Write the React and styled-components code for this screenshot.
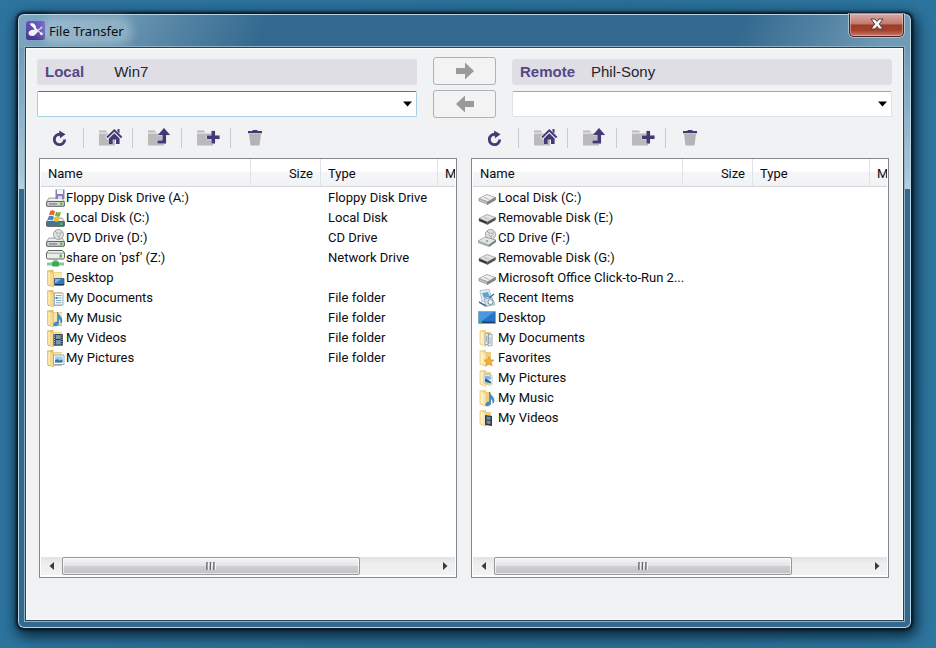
import React from "react";
import styled, { createGlobalStyle } from "styled-components";

const GlobalStyle = createGlobalStyle`
  *, *::before, *::after { box-sizing: border-box; }
  body { margin: 0; background: #2d76a0; }
  button, select { font: inherit; margin: 0; }
`;

const Desktop = styled.div`
  display: flex;
  min-height: 100vh;
  padding: 13px 24px 19px 17px;
  background: linear-gradient(100deg, #2d75a0, #2a7099 60%, #2d76a0);
  font-family: Roboto, "Liberation Sans", sans-serif;
  font-size: 13px;
  color: #0c0c10;
`;

const Window = styled.main`
  flex: 1;
  min-width: 0;
  display: flex;
  flex-direction: column;
  padding: 0 7px 7px;
  border: 1px solid #0b1a26;
  border-radius: 7px;
  background:
    linear-gradient(115deg, rgba(150, 187, 208, 0.75) 0, rgba(134, 172, 194, 0.7) 90px, rgba(51, 105, 143, 0) 230px, rgba(51, 105, 143, 0) 660px, rgba(134, 172, 194, 0.75) 800px) 0 0 / 100% 34px no-repeat,
    linear-gradient(#6f9cb8, #a9c6da 90%, #b6d0e0) 0 34px / 100% 141px no-repeat,
    #33698f;
  box-shadow:
    inset 0 0 0 1px #bcd5e4,
    0 0 3px 1px rgba(0, 10, 20, 0.85),
    2px 5px 14px 3px rgba(0, 15, 28, 0.75);
`;

const TitleBar = styled.header`
  display: flex;
  align-items: center;
  height: 33px;
  padding-left: 1px;
`;

const Title = styled.h1`
  margin: 0 auto 0 0;
  padding: 0 4px;
  font: 400 13px/20px "Noto Sans", "Open Sans", sans-serif;
  color: #0b0f14;
  border-radius: 10px;
  background: rgba(205, 224, 234, 0.35);
  box-shadow: 0 0 9px 5px rgba(205, 224, 234, 0.35);
`;

const CloseButton = styled.button`
  align-self: flex-start;
  display: grid;
  place-items: center;
  width: 55px;
  height: 23px;
  padding: 0 0 2px;
  border: 1px solid #4b2226;
  border-top: 0;
  border-radius: 0 0 5px 5px;
  background: linear-gradient(#d9a9a3, #c07a70 45%, #a03c26 50%, #a3432e 75%, #c87b69);
  box-shadow: inset 0 0 0 1px rgba(255, 220, 212, 0.45), 0 0 0 1px rgba(200, 220, 232, 0.65);
`;

const Client = styled.div`
  flex: 1;
  display: flex;
  flex-direction: column;
  padding: 9px 11px 42px 11px;
  border: 1px solid #2b4150;
  outline: 1px solid #8fb2c6;
  background: #f1f2f4;
  box-shadow: inset 0 0 0 1px #fbfcfc;
`;

const Connections = styled.section`
  display: grid;
  grid-template-columns: minmax(0, 1fr) 63px minmax(0, 1fr);
  grid-template-rows: 28px 28px;
  gap: 5px 16px;
`;

const MachineBar = styled.div`
  display: flex;
  align-items: center;
  align-self: end;
  gap: ${(p) => p.$gap}px;
  height: 26px;
  padding: 0 8px;
  border-radius: 3px;
  background: #dfdee5;
  font: 15px/20px "Liberation Sans", Arial, sans-serif;
  color: #26242e;
`;

const Side = styled.strong`
  color: #554886;
`;

const Combo = styled.div`
  display: grid;
  align-items: center;
  align-self: center;
  height: 26px;

  > * { grid-area: 1 / 1; }
  > svg { justify-self: end; margin-right: 4px; pointer-events: none; }
`;

const PathSelect = styled.select`
  appearance: none;
  width: 100%;
  height: 100%;
  padding: 0 20px 0 6px;
  border: 1px solid ${(p) => (p.$active ? "#a9cfe5" : "#dfe1e5")};
  border-top-color: ${(p) => (p.$active ? "#3c7fb1" : "#a5a7ae")};
  border-radius: 2px;
  background: #fff;
`;

const SendButton = styled.button`
  display: grid;
  place-items: center;
  padding: 0;
  border: 1px solid #adb2b5;
  border-radius: 3px;
  background: #f3f3f4;
  color: #999a9c;
`;

const Browsers = styled.section`
  flex: 1;
  display: grid;
  grid-template-columns: repeat(2, minmax(0, 1fr));
  gap: 14px;
  padding: 0 3px 0 2px;
`;

const Browser = styled.div`
  display: flex;
  flex-direction: column;
`;

const Toolbar = styled.div`
  display: flex;
  align-items: center;
  height: 40px;
  padding-left: ${(p) => p.$inset}px;
`;

const ToolButton = styled.button`
  display: flex;
  align-items: center;
  width: 49px;
  height: 20px;
  padding: 0 0 0 15px;
  border: 0;
  border-left: 1px solid #c9cbd0;
  background: none;

  &:first-child { width: 44px; padding-left: 12px; border-left-color: transparent; }
`;

const ListBox = styled.div`
  flex: 1;
  display: flex;
  flex-direction: column;
  min-width: 0;
  padding: 0 1px 2px;
  border: 1px solid #828790;
  background: #fff;
`;

const TableView = styled.div`
  flex: 1;
  overflow: hidden;
`;

const FileTable = styled.table`
  width: 500px;
  table-layout: fixed;
  border-collapse: separate;
  border-spacing: 0;
  white-space: nowrap;
`;

const HeadCell = styled.th`
  width: ${(p) => p.$width}px;
  height: 28px;
  padding: 1px 7px 0;
  text-align: ${(p) => p.$align || "left"};
  font-weight: 400;
  border-right: 1px solid #e0e2e6;
  border-bottom: 1px solid #d5d5d8;
  background: linear-gradient(#fff 45%, #f5f6f8 50%, #f1f2f4);
`;

const Cell = styled.td`
  height: 20px;
  padding: 2px 7px 0;
  line-height: 18px;
`;

const NameCell = styled(Cell)`
  padding: 2px 0 0 5px;
`;

const FileName = styled.span`
  display: flex;
  align-items: center;
  gap: 1px;
  height: 18px;

  > svg { flex: none; }
`;

const ScrollBar = styled.div`
  display: flex;
  height: 18px;
  background: linear-gradient(#e3e3e3, #eee 40%, #f2f2f2);
`;

const ScrollArrow = styled.button`
  flex: none;
  display: grid;
  place-items: center;
  width: 21px;
  padding: 0;
  border: 0;
  background: none;
`;

const ScrollTrack = styled.div`
  flex: 1;
  display: flex;
`;

const ScrollThumb = styled.div`
  display: grid;
  place-items: center;
  width: 80%;
  border: 1px solid #96979a;
  border-radius: 2px;
  background: linear-gradient(#f4f4f4, #e4e4e5 48%, #cfd0d2 52%, #bfc0c3);
  box-shadow: inset 0 0 0 1px rgba(255, 255, 255, 0.65);
`;

/* ---------- window and toolbar drawings ---------- */

const AppLogo = () => (
  <svg width="19" height="19" viewBox="0 0 19 19" aria-hidden="true">
    <defs>
      <linearGradient id="logo" x2="0" y2="1">
        <stop offset="0" stopColor="#6a55c8" />
        <stop offset="1" stopColor="#4a3496" />
      </linearGradient>
    </defs>
    <rect width="19" height="19" rx="2.5" fill="url(#logo)" />
    <path d="M4.500 2.500C7 1.500 9.500 3 9.800 5.500c.1 1.800 1 2.800 2.200 3.200L10.500 10C8.500 9.500 8 7.500 7 6.300 6 5.200 3.500 4 4.500 2.500z" fill="#fff" />
    <path d="M2.500 12c0-2.200 2.500-3.500 5-3.300 1.800.1 3 .8 4.800.5.5 1.600-.8 2.300-1.900 3.300-1 .9-1.700 2.300-3.700 2.500-2.400.2-4.200-1-4.200-3z" fill="#f2f0fb" />
    <path d="M12 9.200l3.500-2.400M12 9.600l3.500 3.200" stroke="#e6e1fa" strokeWidth="1.200" strokeLinecap="round" />
    <circle cx="15.500" cy="6.600" r="1.100" fill="#cfc6f2" />
    <circle cx="15.400" cy="12.800" r="1.400" fill="#fff" />
  </svg>
);

const CloseMark = () => (
  <svg width="14" height="12" viewBox="0 0 14 12" aria-hidden="true">
    <path d="M1 1h4l2 2.500L9 1h4L9.300 6l3.700 5H9L7 8.500 5 11H1l3.700-5z" fill="#f5f4f6" stroke="#57383d" strokeWidth="1" />
  </svg>
);

const DownMark = () => (
  <svg width="11" height="6" viewBox="0 0 11 6" aria-hidden="true">
    <path d="M1 0.500h9L5.500 5.500z" fill="#000" />
  </svg>
);

const BigArrow = ({ left }) => (
  <svg width="20" height="18" viewBox="0 0 20 18" aria-hidden="true">
    {left ? (
      <path d="M1 9L10 .5V6h9v6h-9v5.500z" fill="currentColor" />
    ) : (
      <path d="M19 9L10 .5V6H1v6h9v5.500z" fill="currentColor" />
    )}
  </svg>
);

const RefreshIcon = () => (
  <svg width="15" height="17" viewBox="0 0 15 17" aria-hidden="true">
    <path d="M12.700 9.500A5.200 5.200 0 1 1 8 4.300" fill="none" stroke="#453876" strokeWidth="2.800" />
    <path d="M7 0.500l6.500 3.700L8 8.300z" fill="#453876" />
  </svg>
);

const FolderShape = () => (
  <path d="M0 4.500V2.500h7l1 2zM0 5.500h16v12H0z" fill="#bab9bb" />
);

const HomeIcon = () => (
  <svg width="24" height="20" viewBox="0 0 24 20" aria-hidden="true">
    <FolderShape />
    <path d="M7.500 10.300L15.300 2.500l7.500 7.800" fill="none" stroke="#f1f2f4" strokeWidth="4" />
    <path d="M8 9.500L15.300 2.300 22.600 9.500" fill="none" stroke="#453876" strokeWidth="2" />
    <path d="M18.500 1h2v4.500l-2-2zM10 10.500l5.300-5.200 5.300 5.200V16h-3.600V11.500h-3.400V16H10z" fill="#453876" />
  </svg>
);

const UpIcon = () => (
  <svg width="24" height="20" viewBox="0 0 24 20" aria-hidden="true">
    <FolderShape />
    <path d="M16 0l6 7h-4v8.500H9.500V12.500h5V7H10z" fill="#453876" stroke="#dddde1" strokeWidth="1" paintOrder="stroke" />
  </svg>
);

const AddIcon = () => (
  <svg width="24" height="20" viewBox="0 0 24 20" aria-hidden="true">
    <FolderShape />
    <path d="M14.500 3h3.500v4.500h4.500v3.500H18v4.500h-3.500V11H10V7.500h4.500z" fill="#453876" stroke="#dddde1" strokeWidth="1" paintOrder="stroke" />
  </svg>
);

const TrashIcon = () => (
  <svg width="18" height="20" viewBox="0 0 18 20" aria-hidden="true">
    <path d="M3 6h12l-1.500 11.500h-9z" fill="#b4b4b7" />
    <path d="M2 3h4.500V2h5v1H16v2.300H2z" fill="#453876" />
  </svg>
);

const ScrollMark = ({ right }) => (
  <svg width="6" height="8" viewBox="0 0 6 8" aria-hidden="true">
    <path d={right ? "M1 0v8l4.500-4z" : "M5 0v8L.5 4z"} fill="#3a3a3e" />
  </svg>
);

const Grip = () => (
  <svg width="10" height="8" viewBox="0 0 10 8" aria-hidden="true">
    <path d="M1 0v8M4.500 0v8M8 0v8" stroke="#66676c" strokeWidth="1.500" />
    <path d="M2.300 1v7M5.800 1v7M9.300 1v7" stroke="#fafafa" strokeWidth="1" />
  </svg>
);

/* ---------- file list drawings ---------- */

const DriveBase = ({ fill = "#d3d4d5" }) => (
  <>
    <path d="M3 9h13l2.500 3.500v4.500H.5v-4.500z" fill="#eceded" stroke="#85878a" strokeWidth=".8" />
    <rect x=".7" y="12.500" width="17.600" height="4.800" rx="1" fill={fill} stroke="#54575b" strokeWidth=".9" />
    <path d="M3 15h8" stroke="#686a6e" strokeWidth="1" />
    <rect x="14.200" y="13.500" width="2.200" height="2.600" fill="#4dc12f" />
  </>
);

const SlimDrive = ({ dark }) => (
  <>
    <path d="M1 9.500L9 5.500l8.500 3-8 4.500z" fill={dark ? "#e3e3e3" : "#eeeeef"} stroke="#909193" strokeWidth=".7" />
    <path d="M1 9.500l8.500 3.500v2.500L1 12z" fill={dark ? "#303133" : "#c1c2c4"} stroke="#77797b" strokeWidth=".5" />
    <path d="M9.500 13l8-4.500V11l-8 4.500z" fill={dark ? "#4b4c4e" : "#88898c"} stroke="#66686a" strokeWidth=".5" />
    <path d="M6 8.500l5 2" stroke="#b5b6b8" strokeWidth="1" />
  </>
);

const Folder = () => (
  <>
    <path d="M2 1.500L7.500.8V3H16v14H2z" fill="#e3bd63" />
    <path d="M5 3.500h11v12H5z" fill="#f7e6ae" />
    <path d="M1.500 1.500L7.500 4v14l-6-2.200z" fill="#f4d98e" stroke="#dcb765" strokeWidth=".7" />
    <path d="M3.200 3v12.500" stroke="#fff2c5" strokeWidth="1.200" />
  </>
);

const SlimFolder = () => (
  <>
    <path d="M3 1.500L8 1v2h5v13H3z" fill="#ecd082" />
    <path d="M2 1.500L8 4v13.500L2 15z" fill="#fbe8ae" stroke="#e6c87c" strokeWidth=".7" />
    <path d="M3.800 3.500v11" stroke="#fff8dc" strokeWidth="1.200" />
  </>
);

const Disc = () => (
  <>
    <circle cx="12.500" cy="5.500" r="5" fill="#dedfe2" stroke="#8c9092" strokeWidth=".8" />
    <path d="M12.500 5.500L9 2M12.500 5.500l4-2.500M12.500 5.500l1 4.500" stroke="#9bb09d" strokeWidth="1" />
    <circle cx="12.500" cy="5.500" r="1.500" fill="#fff" stroke="#777" strokeWidth=".6" />
  </>
);

const Note = () => (
  <path d="M11.500 3c0 3 5 4.500 4.500 9 0 1-.5 1.800-1.200 2.300.7-2.500-1-4.300-2.200-4.800V14c0 1.800-1.600 3-3.300 3s-2.300-1.800-1-3 2.200-1 3.200-.9V3z" fill="#3c91d2" stroke="#2b6ba6" strokeWidth=".5" />
);

const drawings = {
  floppy: (
    <>
      <DriveBase />
      <path d="M9.500.5h9v9.500h-9z" fill="#8480b5" />
      <path d="M11 .5h6V5h-6z" fill="#f4f4fb" />
      <path d="M12 7h4v3h-4z" fill="#d6d6e8" />
    </>
  ),
  system: (
    <>
      <DriveBase fill="#42799b" />
      <path d="M4 2c2-1 3.500-.8 5 .2L8 6.500c-1.500-1-3-1-5-.2z" fill="#e5692d" />
      <path d="M10 2.700c1.500 1 3.200 1 5 .3l-1.200 4.200c-1.700.8-3.300.7-4.800-.3z" fill="#75b43c" />
      <path d="M2.700 7.200c2-.9 3.500-.7 5 .3l-1.100 4c-1.600-.9-3.200-1-5-.2z" fill="#3e87cc" />
      <path d="M8.700 7.900c1.500 1 3.100 1 4.900.3l-1.100 4c-1.800.8-3.400.7-4.900-.3z" fill="#f2bd2e" />
    </>
  ),
  dvd: (
    <>
      <DriveBase />
      <Disc />
    </>
  ),
  network: (
    <>
      <path d="M2.500 1.500h14L18.500 4v4.500a1.500 1.500 0 0 1-1.500 1.500H2A1.500 1.500 0 0 1 .5 8.500V4z" fill="#eceded" stroke="#616467" strokeWidth="1" />
      <path d="M1 4.200h17" stroke="#8b8e91" strokeWidth=".8" />
      <rect x="13.500" y="5.500" width="2.500" height="3" fill="#4dc12f" />
      <path d="M7.500 10.500h4v3h6.500v3H1v-3h6.500z" fill="#86c893" />
      <rect x="6" y="12.500" width="7" height="5" rx="1" fill="#3da957" />
    </>
  ),
  disk: <SlimDrive />,
  removable: <SlimDrive dark />,
  cd: (
    <>
      <Disc />
      <path d="M0 12l7-4 11 3-7 5z" fill="#e2e3e4" stroke="#8b8d90" strokeWidth=".7" />
      <path d="M0 12l11 4v2L0 14z" fill="#a9abad" />
      <path d="M11 16l7-5v2l-7 5z" fill="#707275" />
      <circle cx="9" cy="12" r="1" fill="#5dbb41" />
    </>
  ),
  recent: (
    <>
      <path d="M2 1.500L11 .5l3 10-10 2z" fill="#e9f1f5" stroke="#9aa8b2" strokeWidth=".7" />
      <path d="M4 4l6-1 2 5-6 1z" fill="#58a5cf" />
      <path d="M6 10l8-1.500 3 7-9 2z" fill="#d5dde2" stroke="#8995a0" strokeWidth=".7" />
      <path d="M1 13l7 4M11 9l5-4" stroke="#3d719a" strokeWidth="1.500" />
      <circle cx="12.500" cy="13" r="2.500" fill="#f7fafb" stroke="#4c819f" strokeWidth=".8" />
    </>
  ),
  screen: (
    <>
      <path d="M.5 2.500h17v12H.5z" fill="#2675c3" stroke="#78a8ca" strokeWidth=".8" />
      <path d="M1 3h15L4 12H1z" fill="#4899df" />
      <path d="M1 13.300h16" stroke="#163e69" strokeWidth="1.300" />
      <circle cx="2.500" cy="13.500" r="1.500" fill="#55ba61" />
    </>
  ),
  desktop: (
    <>
      <Folder />
      <path d="M8.500 9.500h9.500v6.500H8.500z" fill="#3079bf" stroke="#375a76" strokeWidth=".8" />
      <path d="M9 10h6l-5 4H9z" fill="#77b8e6" />
      <path d="M9 15.600h9" stroke="#173b5e" strokeWidth="1.200" />
    </>
  ),
  documents: (
    <>
      <Folder />
      <path d="M8.500 4H17v12H8.500z" fill="#f5fafc" stroke="#8ba0ac" strokeWidth=".8" />
      <path d="M10 6.500h5.500M12 9h3.500M10 11.500h5.500M10 13.700h5.500" stroke="#88a9c1" strokeWidth="1" />
      <path d="M9.500 8h2v2h-2z" fill="#3d83b8" />
    </>
  ),
  papers: (
    <>
      <SlimFolder />
      <path d="M7 5l3.500-1v11L7 16zM10 6l4-1v11.500L10 17z" fill="#eef3f6" stroke="#8497a4" strokeWidth=".8" />
      <path d="M8.500 7v6M12 8v7" stroke="#91a1ad" strokeWidth=".8" />
    </>
  ),
  favorites: (
    <>
      <SlimFolder />
      <path d="M11 7.500l1.300 3.300 3.700.2-2.800 2.400 1 3.600-3.200-2-3.200 2 1-3.600L6 11l3.700-.2z" fill="#f4ae37" stroke="#d99538" strokeWidth=".7" />
    </>
  ),
  photos: (
    <>
      <SlimFolder />
      <path d="M6 5l8 1.500v9L6 14z" fill="#f4f9fc" stroke="#9db0bc" strokeWidth=".7" />
      <path d="M7 6.500l6 1v3l-6-.5z" fill="#7cb9e3" />
      <path d="M7 9.500l3 1 3 2.500v1.500L7 13z" fill="#38617e" />
      <path d="M10 16l5-2v2l-3 1.500z" fill="#dce5ea" />
    </>
  ),
  songs: (
    <>
      <SlimFolder />
      <Note />
    </>
  ),
  films: (
    <>
      <SlimFolder />
      <path d="M7 6l7 1v10l-7-1z" fill="#343a44" />
      <path d="M8.500 7.500l4 .5v3l-4-.5zM8.500 11.500l4 .5v3l-4-.5z" fill="#5b8fbd" />
      <path d="M9 14l2.500-2v2.500z" fill="#c18a5a" />
    </>
  ),
  music: (
    <>
      <Folder />
      <Note />
    </>
  ),
  videos: (
    <>
      <Folder />
      <path d="M7.500 5H17v11.500H7.500z" fill="#343a44" />
      <path d="M9.800 6h5v4h-5zM9.800 11h5v4.500h-5z" fill="#649bca" />
      <path d="M8.600 5.500v11M16 5.500v11" stroke="#dde3e8" strokeWidth="1" strokeDasharray="1 1.200" />
      <path d="M10 9l3-2v3zM11 15l3-3v3z" fill="#c18a5a" />
    </>
  ),
  pictures: (
    <>
      <Folder />
      <path d="M7.500 6H18v9.500H7.500z" fill="#fafcfd" stroke="#8b9ba7" strokeWidth=".8" />
      <path d="M9 7.500h7.500v6H9z" fill="#9ccdf0" />
      <path d="M9 13.500v-2l2.500-1.500 2 1.500 3-1v3z" fill="#3d769b" />
    </>
  ),
};

const FileIcon = ({ kind }) => (
  <svg width="19" height="19" viewBox="0 0 19 19" aria-hidden="true">
    {drawings[kind]}
  </svg>
);

/* ---------- data ---------- */

const localFiles = [
  ["floppy", "Floppy Disk Drive (A:)", "Floppy Disk Drive"],
  ["system", "Local Disk (C:)", "Local Disk"],
  ["dvd", "DVD Drive (D:)", "CD Drive"],
  ["network", "share on 'psf' (Z:)", "Network Drive"],
  ["desktop", "Desktop", ""],
  ["documents", "My Documents", "File folder"],
  ["music", "My Music", "File folder"],
  ["videos", "My Videos", "File folder"],
  ["pictures", "My Pictures", "File folder"],
];

const remoteFiles = [
  ["disk", "Local Disk (C:)", ""],
  ["removable", "Removable Disk (E:)", ""],
  ["cd", "CD Drive (F:)", ""],
  ["removable", "Removable Disk (G:)", ""],
  ["disk", "Microsoft Office Click-to-Run 2...", ""],
  ["recent", "Recent Items", ""],
  ["screen", "Desktop", ""],
  ["papers", "My Documents", ""],
  ["favorites", "Favorites", ""],
  ["photos", "My Pictures", ""],
  ["songs", "My Music", ""],
  ["films", "My Videos", ""],
];

const tools = [
  ["Refresh", RefreshIcon],
  ["Home folder", HomeIcon],
  ["Up one level", UpIcon],
  ["New folder", AddIcon],
  ["Delete", TrashIcon],
];

function FileBrowser({ label, files, toolInset }) {
  return (
    <Browser>
      <Toolbar role="toolbar" aria-label={`${label} tools`} $inset={toolInset}>
        {tools.map(([name, Icon]) => (
          <ToolButton key={name} type="button" aria-label={name}>
            <Icon />
          </ToolButton>
        ))}
      </Toolbar>
      <ListBox>
        <TableView>
          <FileTable aria-label={`${label} files`}>
            <thead>
              <tr>
                <HeadCell $width={210}>Name</HeadCell>
                <HeadCell $width={70} $align="right">Size</HeadCell>
                <HeadCell $width={117}>Type</HeadCell>
                <HeadCell $width={103}>M</HeadCell>
              </tr>
            </thead>
            <tbody>
              {files.map(([kind, name, type]) => (
                <tr key={name}>
                  <NameCell>
                    <FileName>
                      <FileIcon kind={kind} />
                      {name}
                    </FileName>
                  </NameCell>
                  <Cell />
                  <Cell>{type}</Cell>
                  <Cell />
                </tr>
              ))}
            </tbody>
          </FileTable>
        </TableView>
        <ScrollBar>
          <ScrollArrow type="button" aria-label="Scroll left"><ScrollMark /></ScrollArrow>
          <ScrollTrack>
            <ScrollThumb><Grip /></ScrollThumb>
          </ScrollTrack>
          <ScrollArrow type="button" aria-label="Scroll right"><ScrollMark right /></ScrollArrow>
        </ScrollBar>
      </ListBox>
    </Browser>
  );
}

export default function App() {
  return (
    <>
      <GlobalStyle />
      <Desktop>
        <Window>
          <TitleBar>
            <AppLogo />
            <Title>File Transfer</Title>
            <CloseButton type="button" aria-label="Close"><CloseMark /></CloseButton>
          </TitleBar>
          <Client>
            <Connections>
              <MachineBar $gap={30}><Side>Local</Side>Win7</MachineBar>
              <SendButton type="button" aria-label="Send to remote"><BigArrow /></SendButton>
              <MachineBar $gap={16}><Side>Remote</Side>Phil-Sony</MachineBar>
              <Combo>
                <PathSelect $active aria-label="Local path" />
                <DownMark />
              </Combo>
              <SendButton type="button" aria-label="Send to local"><BigArrow left /></SendButton>
              <Combo>
                <PathSelect aria-label="Remote path" />
                <DownMark />
              </Combo>
            </Connections>
            <Browsers>
              <FileBrowser label="Local" files={localFiles} toolInset={0} />
              <FileBrowser label="Remote" files={remoteFiles} toolInset={3} />
            </Browsers>
          </Client>
        </Window>
      </Desktop>
    </>
  );
}
